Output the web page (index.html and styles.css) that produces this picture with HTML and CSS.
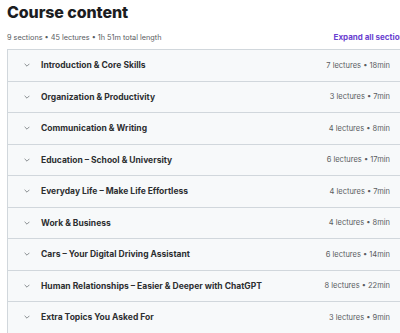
FILE: index.html
```html
<!DOCTYPE html>
<html>
<head>
<meta charset="utf-8">
<link rel="stylesheet" href="styles.css">
</head>
<body>
<div class="page">
  <h2 class="title">Course content</h2>
  <div class="meta-bar">
    <span class="stats">9 sections • 45 lectures • 1h 51m total length</span>
    <span class="expand">Expand all sections</span>
  </div>
  <div class="sections">
    <div class="row"><span class="chev"><svg viewBox="0 0 10 6" width="6" height="4"><path d="M1 1l4 4 4-4" fill="none" stroke="#6a6f73" stroke-width="1.3"/></svg></span><span class="name">Introduction &amp; Core Skills</span><span class="info">7 lectures • 18min</span></div>
    <div class="row"><span class="chev"><svg viewBox="0 0 10 6" width="6" height="4"><path d="M1 1l4 4 4-4" fill="none" stroke="#6a6f73" stroke-width="1.3"/></svg></span><span class="name">Organization &amp; Productivity</span><span class="info">3 lectures • 7min</span></div>
    <div class="row"><span class="chev"><svg viewBox="0 0 10 6" width="6" height="4"><path d="M1 1l4 4 4-4" fill="none" stroke="#6a6f73" stroke-width="1.3"/></svg></span><span class="name">Communication &amp; Writing</span><span class="info">4 lectures • 8min</span></div>
    <div class="row"><span class="chev"><svg viewBox="0 0 10 6" width="6" height="4"><path d="M1 1l4 4 4-4" fill="none" stroke="#6a6f73" stroke-width="1.3"/></svg></span><span class="name">Education – School &amp; University</span><span class="info">6 lectures • 17min</span></div>
    <div class="row"><span class="chev"><svg viewBox="0 0 10 6" width="6" height="4"><path d="M1 1l4 4 4-4" fill="none" stroke="#6a6f73" stroke-width="1.3"/></svg></span><span class="name">Everyday Life – Make Life Effortless</span><span class="info">4 lectures • 7min</span></div>
    <div class="row"><span class="chev"><svg viewBox="0 0 10 6" width="6" height="4"><path d="M1 1l4 4 4-4" fill="none" stroke="#6a6f73" stroke-width="1.3"/></svg></span><span class="name">Work &amp; Business</span><span class="info">4 lectures • 8min</span></div>
    <div class="row"><span class="chev"><svg viewBox="0 0 10 6" width="6" height="4"><path d="M1 1l4 4 4-4" fill="none" stroke="#6a6f73" stroke-width="1.3"/></svg></span><span class="name">Cars – Your Digital Driving Assistant</span><span class="info">6 lectures • 14min</span></div>
    <div class="row"><span class="chev"><svg viewBox="0 0 10 6" width="6" height="4"><path d="M1 1l4 4 4-4" fill="none" stroke="#6a6f73" stroke-width="1.3"/></svg></span><span class="name">Human Relationships – Easier &amp; Deeper with ChatGPT</span><span class="info">8 lectures • 22min</span></div>
    <div class="row"><span class="chev"><svg viewBox="0 0 10 6" width="6" height="4"><path d="M1 1l4 4 4-4" fill="none" stroke="#6a6f73" stroke-width="1.3"/></svg></span><span class="name">Extra Topics You Asked For</span><span class="info">3 lectures • 9min</span></div>
  </div>
</div>
</body>
</html>
```

FILE: styles.css
```css
html, body {
  margin: 0;
  padding: 0;
  background: #ffffff;
  overflow: hidden;
}
body {
  font-family: Inter, "Liberation Sans", sans-serif;
  color: #2d2f31;
}
.page {
  width: 400px;
  padding-left: 7px;
}
.title {
  margin: 0;
  padding-top: 2px;
  font-size: 16px;
  font-weight: 800;
  line-height: 20px;
  letter-spacing: -0.1px;
  color: #1c1d1f;
}
.meta-bar {
  display: flex;
  justify-content: space-between;
  align-items: center;
  height: 27px;
  box-sizing: border-box;
  padding-top: 3px;
}
.stats {
  font-size: 7.3px;
  color: #595c5f;
}
.expand {
  font-size: 8px;
  font-weight: 700;
  color: #6a3fd0;
  margin-right: -2px;
}
.sections {
  border: 1px solid #d1d7dc;
  border-right: none;
}
.row {
  display: flex;
  align-items: center;
  height: 31.5px;
  box-sizing: border-box;
  background: #f7f9fa;
  border-bottom: 1px solid #d1d7dc;
  padding-left: 16px;
  padding-right: 17px;
}
.chev {
  width: 17px;
  display: flex;
  align-items: center;
}
.name {
  flex: 1;
  font-size: 8.5px;
  font-weight: 700;
  color: #2d2f31;
}
.info {
  font-size: 7.5px;
  color: #595c5f;
}
```
